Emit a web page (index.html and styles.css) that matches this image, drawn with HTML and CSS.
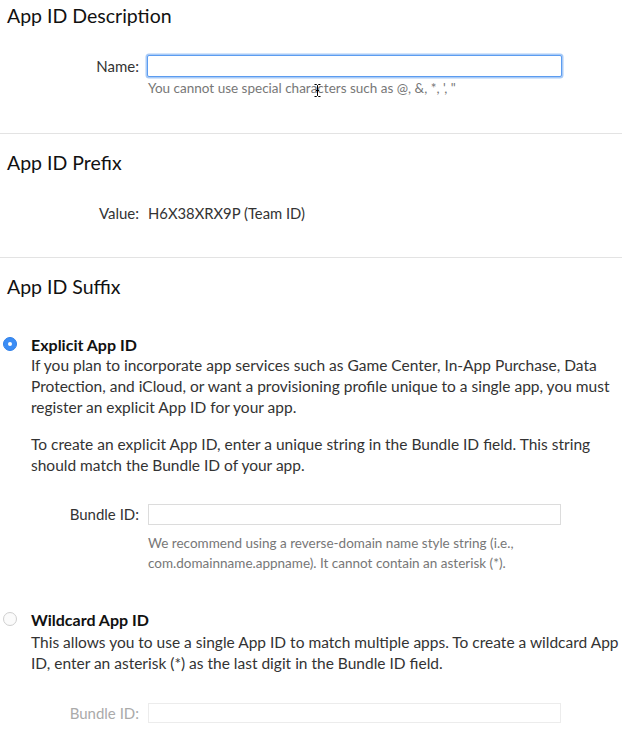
FILE: index.html
```html
<!DOCTYPE html>
<html>
<head>
<meta charset="utf-8">
<link rel="stylesheet" href="styles.css">
</head>
<body>
<div class="page">
  <section class="sec sec-desc">
    <h2 class="sec-title">App ID Description</h2>
    <div class="field-row name-row">
      <label class="field-label">Name:</label>
      <div class="field-body">
        <div class="input input-focus"></div>
        <p class="hint hint-name">You cannot use special characters such as @, &amp;, *, ', "<svg class="ibeam" width="7" height="13" viewBox="0 0 7 13"><path d="M0.5 0.5h2l1 1 1-1h2M3.5 1.5v10M0.5 12.5h2l1-1 1 1h2M2 6.5h3" fill="none" stroke="#000" stroke-width="1"/></svg></p>
      </div>
    </div>
  </section>

  <section class="sec sec-prefix">
    <h2 class="sec-title">App ID Prefix</h2>
    <div class="field-row value-row">
      <span class="field-label">Value:</span>
      <span class="field-value">H6X38XRX9P (Team ID)</span>
    </div>
  </section>

  <section class="sec sec-suffix">
    <h2 class="sec-title">App ID Suffix</h2>

    <div class="option">
      <div class="option-head">
        <span class="radio radio-on"></span>
        <span class="option-title">Explicit App ID</span>
      </div>
      <div class="option-body">
        <p class="para">If you plan to incorporate app services such as Game Center, In-App Purchase, Data Protection, and iCloud, or want a provisioning profile unique to a single app, you must register an explicit App ID for your app.</p>
        <p class="para para-2">To create an explicit App ID, enter a unique string in the Bundle ID field. This string should match the Bundle ID of your app.</p>
      </div>
      <div class="field-row bundle-row">
        <label class="field-label">Bundle ID:</label>
        <div class="field-body">
          <div class="input input-plain"></div>
          <p class="hint hint-bundle">We recommend using a reverse-domain name style string (i.e., com.domainname.appname). It cannot contain an asterisk (*).</p>
        </div>
      </div>
    </div>

    <div class="option option-2">
      <div class="option-head">
        <span class="radio"></span>
        <span class="option-title">Wildcard App ID</span>
      </div>
      <div class="option-body">
        <p class="para">This allows you to use a single App ID to match multiple apps. To create a wildcard App ID, enter an asterisk (*) as the last digit in the Bundle ID field.</p>
      </div>
      <div class="field-row bundle-row disabled">
        <label class="field-label">Bundle ID:</label>
        <div class="field-body">
          <div class="input input-disabled"></div>
        </div>
      </div>
    </div>
  </section>
</div>
</body>
</html>
```

FILE: styles.css
```css
* { box-sizing: border-box; }
html, body { margin: 0; padding: 0; background: #fff; }
body {
  font-family: "Lato", "Open Sans", "Liberation Sans", sans-serif;
  color: #333;
  width: 622px;
  overflow: hidden;
}
p { margin: 0; }
h2 { margin: 0; }

.sec { border-bottom: 1px solid #e3e3e3; }
.sec-suffix { border-bottom: none; }

.sec-title {
  font-weight: 400;
  font-size: 19.5px;
  line-height: 24px;
  color: #111;
  padding-left: 7px;
}
.sec-desc { padding-top: 4px; padding-bottom: 35px; }
.sec-prefix { padding-top: 17px; padding-bottom: 34px; }
.sec-suffix { padding-top: 17px; }

.field-row { display: flex; align-items: flex-start; }
.field-label {
  width: 148px;
  text-align: right;
  padding-right: 9px;
  font-size: 15px;
  color: #333;
  flex: none;
}
.field-body { flex: none; width: 415px; }

.name-row { margin-top: 27px; }
.name-row .field-label { line-height: 22px; }
.input { width: 415px; height: 22px; background: #fff; }
.input-focus {
  border: 1px solid #5c9cf0;
  box-shadow: 0 0 0 1.5px #a9cbf7;
  border-radius: 2px;
  margin-left: -1px;
}
.hint { font-size: 13.5px; color: #777; position: relative; }
.hint-name { margin-top: 1px; line-height: 20px; }
.ibeam { position: absolute; left: 166px; top: 6px; }

.value-row { margin-top: 28px; line-height: 20px; }
.value-row .field-label { line-height: 20px; }
.field-value { font-size: 14.8px; color: #333; }

.option { margin-top: 35px; }
.option-head { display: flex; align-items: center; height: 20px; }
.radio {
  width: 14px; height: 14px; border-radius: 50%;
  margin-left: 3px; margin-right: 14px;
  border: 1px solid #cfcfcf; background: #fbfbfb;
  flex: none; position: relative;
}
.radio-on { background: #3b8df5; border-color: #2f7fe8; }
.radio-on::after {
  content: ""; position: absolute; left: 4px; top: 4px;
  width: 4px; height: 4px; border-radius: 50%; background: #fff;
}
.option-title { font-weight: 700; font-size: 16px; color: #111; }
.option-body { padding-left: 31px; padding-right: 0; margin-top: 1px; }
.para { font-size: 15.5px; line-height: 21px; color: #333; }
.para-2 { margin-top: 16px; }

.bundle-row { margin-top: 28px; }
.bundle-row .field-label { line-height: 21px; }
.input-plain { width: 413px; height: 21px; border: 1px solid #dcdcdc; }
.hint-bundle { margin-top: 8px; line-height: 20px; }

.option-2 { margin-top: 36px; }
.option-2 .option-body { margin-top: 3px; }
.option-2 .bundle-row { margin-top: 29px; }
.input-disabled { width: 413px; height: 20px; border: 1px solid #ececec; }
.disabled .field-label { color: #aaa; }
```
